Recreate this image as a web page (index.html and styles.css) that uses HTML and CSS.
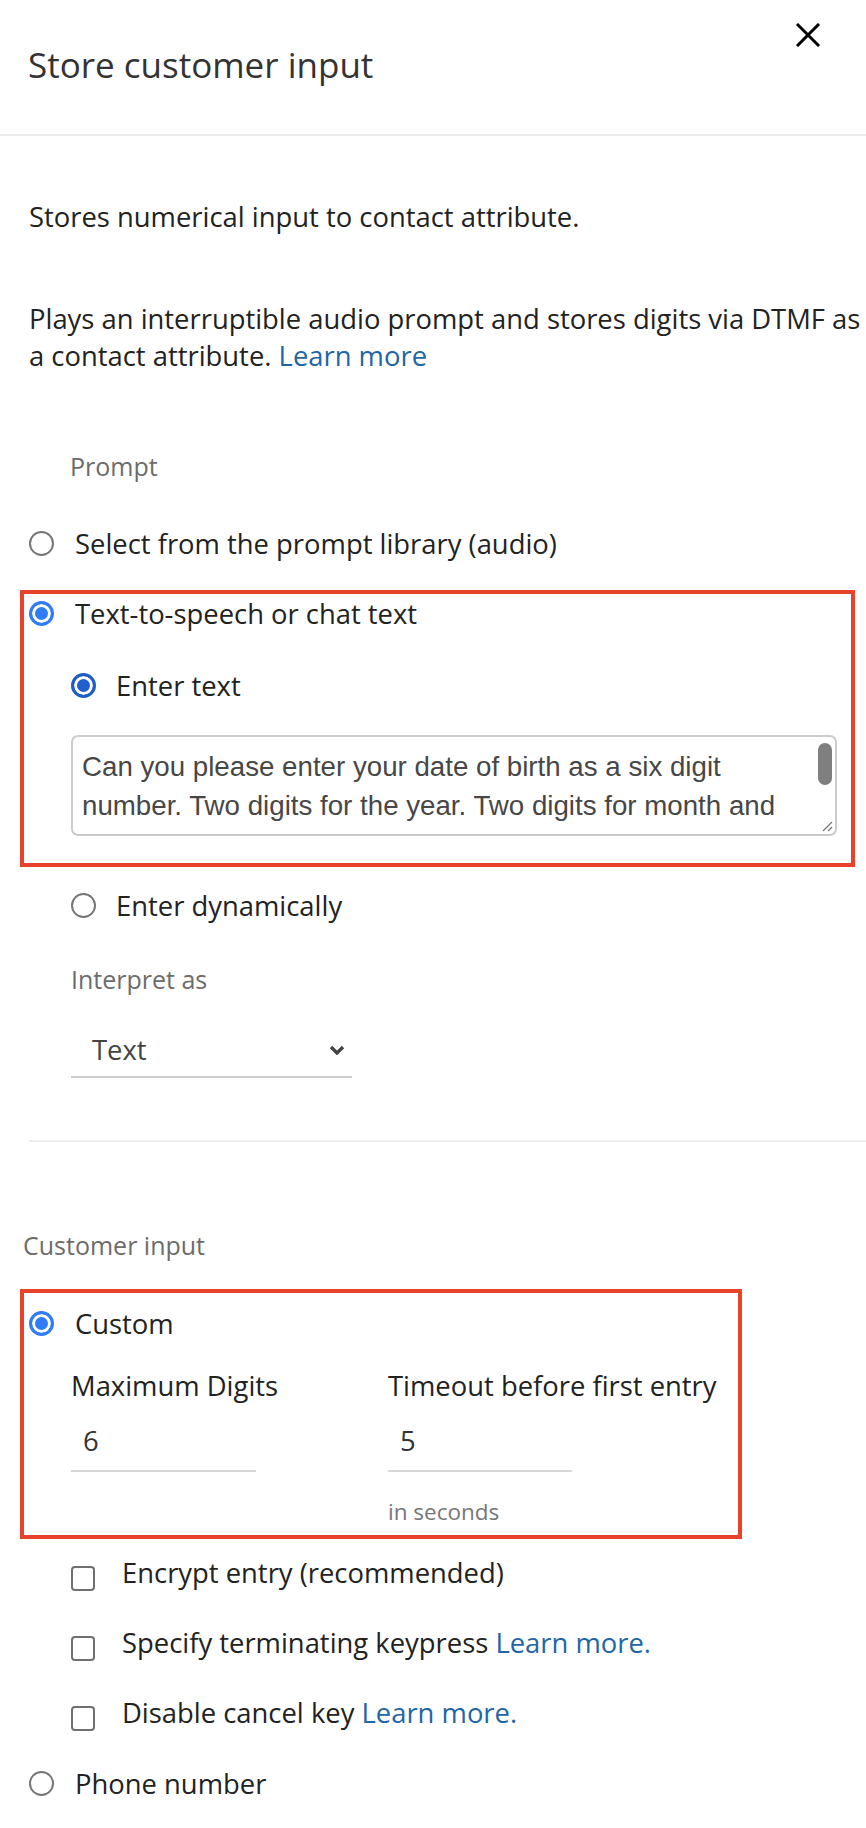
FILE: index.html
```html
<!DOCTYPE html>
<html lang="en">
<head>
<meta charset="utf-8">
<title>Store customer input</title>
<link rel="stylesheet" href="styles.css">
</head>
<body>
<div class="panel">
  <header class="panel-header">
    <h1 class="panel-title">Store customer input</h1>
    <button class="close-btn" aria-label="Close">
      <svg viewBox="0 0 24 24" width="24" height="24"><path d="M2 2 L22 22 M22 2 L2 22" stroke="#000" stroke-width="3" stroke-linecap="square" fill="none"/></svg>
    </button>
  </header>

  <div class="panel-body">
    <p class="desc">Stores numerical input to contact attribute.</p>
    <p class="desc desc-second">Plays an interruptible audio prompt and stores digits via DTMF as a contact attribute. <a href="#" class="link">Learn more</a></p>

    <div class="field-label label-prompt">Prompt</div>
    <div class="radio-row row-library"><span class="radio"></span><span>Select from the prompt library (audio)</span></div>

    <div class="highlight highlight-prompt">
      <div class="radio-row"><span class="radio checked"></span><span>Text-to-speech or chat text</span></div>
      <div class="sub">
        <div class="radio-row row-enter-text"><span class="radio checked dark"></span><span>Enter text</span></div>
        <div class="textarea">
          <div class="textarea-text">Can you please enter your date of birth as a six digit number. Two digits for the year. Two digits for month and two digits for day.</div>
          <span class="scroll-thumb"></span>
          <svg class="resize-grip" viewBox="0 0 12 12" width="12" height="12"><path d="M11 2 L2 11 M11 7 L7 11" stroke="#777" stroke-width="1.3" fill="none"/></svg>
        </div>
      </div>
    </div>

    <div class="sub">
      <div class="radio-row row-dynamic"><span class="radio"></span><span>Enter dynamically</span></div>
      <div class="field-label label-interpret">Interpret as</div>
      <div class="select">
        <span class="select-value">Text</span>
        <svg class="chevron" viewBox="0 0 16 10" width="16" height="10"><polyline points="2,2 8,8 14,2" fill="none" stroke="#444" stroke-width="3.4"/></svg>
      </div>
    </div>

    <div class="divider"></div>

    <div class="field-label label-customer">Customer input</div>

    <div class="highlight highlight-input">
      <div class="radio-row"><span class="radio checked"></span><span>Custom</span></div>
      <div class="sub fields">
        <div class="field field-max">
          <div class="field-name">Maximum Digits</div>
          <div class="text-input input-max">6</div>
        </div>
        <div class="field field-timeout">
          <div class="field-name">Timeout before first entry</div>
          <div class="text-input input-timeout">5</div>
          <div class="hint">in seconds</div>
        </div>
      </div>
    </div>

    <div class="sub checks">
      <div class="check-row"><span class="checkbox"></span><span>Encrypt entry (recommended)</span></div>
      <div class="check-row"><span class="checkbox"></span><span>Specify terminating keypress <a href="#" class="link">Learn more.</a></span></div>
      <div class="check-row"><span class="checkbox"></span><span>Disable cancel key <a href="#" class="link">Learn more.</a></span></div>
    </div>

    <div class="radio-row row-phone"><span class="radio"></span><span>Phone number</span></div>
  </div>
</div>
</body>
</html>
```

FILE: styles.css
```css
* { box-sizing: border-box; }

html, body {
  margin: 0;
  padding: 0;
  background: #fff;
}

body {
  width: 866px;
  font-family: "Open Sans", "Liberation Sans", sans-serif;
  font-size: 27.4px;
  line-height: 37px;
  color: #222;
}

.panel {
  min-height: 1828px;
}

.panel-header {
  position: relative;
  height: 136px;
  padding: 41px 0 0 28px;
  border-bottom: 2px solid #ececec;
}

.panel-title {
  margin: 0;
  font-size: 35px;
  line-height: 48px;
  font-weight: 400;
  color: #333;
}

.close-btn {
  position: absolute;
  top: 23px;
  left: 796px;
  width: 24px;
  height: 24px;
  padding: 0;
  border: 0;
  background: none;
}

.close-btn svg { display: block; }

.panel-body {
  padding: 62px 0 0 29px;
}

.desc { margin: 0; }

.desc-second { margin-top: 65px; }

.link {
  color: #1e66a6;
  text-decoration: none;
}

.field-label {
  font-size: 25px;
  line-height: 36px;
  color: #6c6c6c;
}

.label-prompt { margin: 74px 0 0 41px; }

.radio-row {
  display: flex;
  align-items: center;
  gap: 21px;
}

.radio {
  flex-shrink: 0;
  width: 25px;
  height: 25px;
  border: 2px solid #767676;
  border-radius: 50%;
  background: #fff;
}

.radio.checked {
  border: 3px solid #2f7cf6;
  background: #2f7cf6;
  box-shadow: inset 0 0 0 3px #fff;
}

.radio.checked.dark {
  border-color: #1f5cc6;
  background: #2160cb;
}

.row-library { margin-top: 41px; }

.highlight {
  border: 4px solid #e8412c;
  margin-left: -9px;
  padding-left: 5px;
}

.highlight-prompt {
  width: 835px;
  margin-top: 28px;
  padding-top: 1px;
  padding-bottom: 27px;
}

.sub { padding-left: 42px; }

.sub .radio-row { gap: 20px; }

.row-enter-text { margin-top: 35px; }

.textarea {
  position: relative;
  margin-top: 31px;
  width: 766px;
  height: 101px;
  border: 2px solid #cbcbcb;
  border-radius: 7px;
  padding: 10px 22px 0 9px;
  overflow: hidden;
}

.textarea-text {
  height: 78px;
  overflow: hidden;
  font-family: "Liberation Sans", Arial, sans-serif;
  font-size: 27.7px;
  line-height: 39px;
  color: #474747;
}

.scroll-thumb {
  position: absolute;
  top: 6px;
  right: 3px;
  width: 14px;
  height: 42px;
  border-radius: 7px;
  background: #7f7f7f;
}

.resize-grip {
  position: absolute;
  right: 2px;
  bottom: 2px;
}

.row-dynamic { margin-top: 20px; }

.label-interpret { margin-top: 37px; }

.select {
  display: flex;
  align-items: center;
  justify-content: space-between;
  width: 281px;
  margin-top: 34px;
  padding: 0 7px 8px 21px;
  border-bottom: 2px solid #cccccc;
  color: #444;
}

.chevron { display: block; }

.divider {
  margin-top: 62px;
  height: 2px;
  background: #efefef;
}

.label-customer {
  margin: 85px 0 0 -6px;
}

.highlight-input {
  width: 722px;
  margin-top: 26px;
  padding-top: 12px;
  padding-bottom: 8px;
}

.fields {
  display: grid;
  grid-template-columns: 317px 1fr;
  margin-top: 25px;
}

.field {
  display: flex;
  flex-direction: column;
}

.text-input {
  margin-top: 18px;
  padding: 0 0 11px 12px;
  border-bottom: 2px solid #d8d8d8;
  color: #333;
}

.input-max { width: 185px; }

.input-timeout { width: 184px; }

.hint {
  margin-top: 25px;
  font-size: 22.5px;
  line-height: 30px;
  color: #777;
}

.checks {
  display: flex;
  flex-direction: column;
  gap: 33px;
  margin-top: 15px;
}

.check-row {
  display: flex;
  gap: 27px;
}

.checkbox {
  flex-shrink: 0;
  align-self: flex-start;
  width: 24px;
  height: 25px;
  margin-top: 12px;
  border: 2px solid #707070;
  border-radius: 4px;
  background: #fff;
}

.row-phone { margin-top: 34px; }
```
